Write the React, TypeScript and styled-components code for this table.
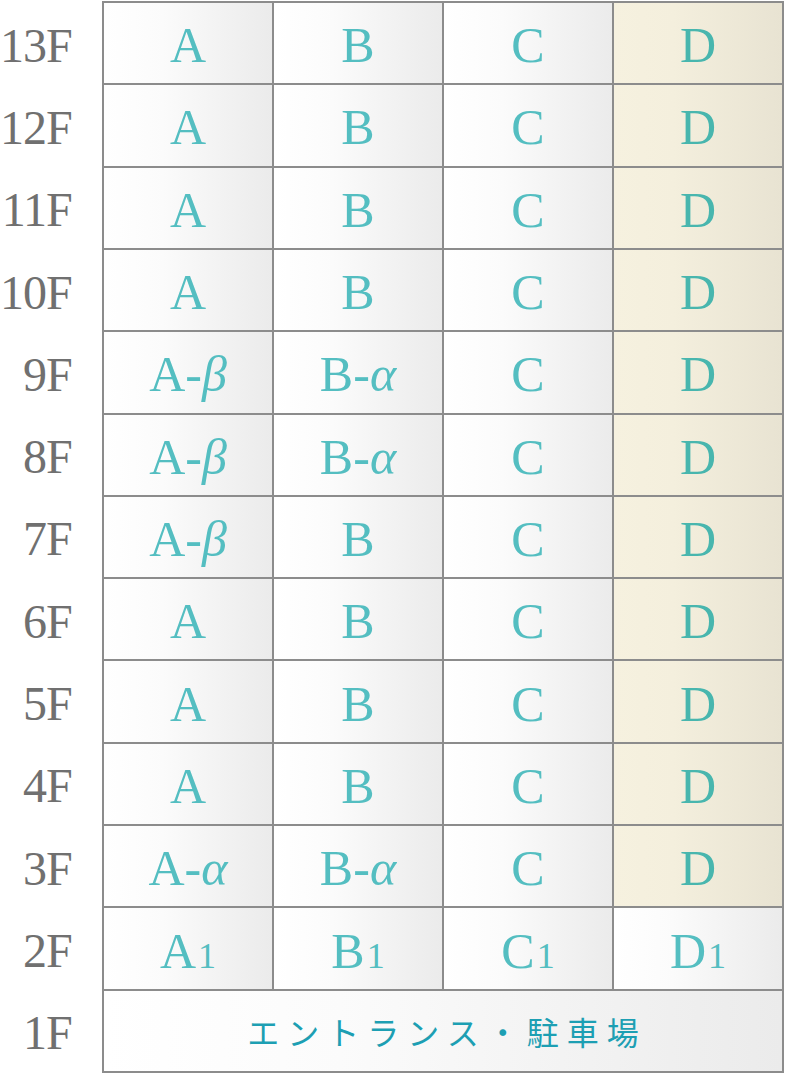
import React from "react";
import styled, { createGlobalStyle } from "styled-components";

const GlobalStyle = createGlobalStyle`
  html, body {
    margin: 0;
    padding: 0;
    background: #fff;
  }
`;

const Page = styled.div`
  display: grid;
  grid-template-columns: 102px 682px;
  padding-top: 1px;
  height: 1072px;
`;

const Labels = styled.div`
  display: grid;
  grid-template-rows: repeat(13, 1fr);
  row-gap: 2px;
  padding: 2px 0;
`;

const Label = styled.div`
  display: flex;
  align-items: center;
  justify-content: flex-end;
  padding-right: 31px;
  padding-top: 4px;
  font-family: "Liberation Serif", serif;
  font-size: 48px;
  color: #707070;
  letter-spacing: -1px;
`;

const Table = styled.div`
  display: grid;
  grid-template-columns: repeat(4, 1fr);
  grid-template-rows: repeat(13, 1fr);
  gap: 2px;
  padding: 2px;
  background: #8c8c8c;
`;

const Cell = styled.div<{ $tone?: "plain" | "beige" }>`
  display: flex;
  align-items: center;
  justify-content: center;
  padding-top: 4px;
  font-family: "Liberation Serif", serif;
  font-size: 50px;
  color: ${({ $tone }) => ($tone === "beige" ? "#48b6ae" : "#54bec1")};
  background: ${({ $tone }) =>
    $tone === "beige"
      ? "linear-gradient(to right, #f6f1df 0%, #f4efdd 35%, #e8e3d2 100%)"
      : "linear-gradient(to right, #ffffff 0%, #fbfbfb 35%, #ebebeb 100%)"};
`;

const Wide = styled(Cell)`
  grid-column: 1 / span 4;
  font-family: "Noto Sans CJK JP", sans-serif;
  font-size: 32px;
  letter-spacing: 8px;
  padding-left: 8px;
  padding-top: 0;
  color: #1d9fb3;
`;

const Greek = styled.i`
  font-style: italic;
`;

const Small = styled.span`
  font-size: 0.72em;
  margin-left: 2px;
  vertical-align: baseline;
`;

const floors = [
  { f: "13F", units: ["A", "B", "C", "D"] },
  { f: "12F", units: ["A", "B", "C", "D"] },
  { f: "11F", units: ["A", "B", "C", "D"] },
  { f: "10F", units: ["A", "B", "C", "D"] },
  { f: "9F", units: ["A-β", "B-α", "C", "D"] },
  { f: "8F", units: ["A-β", "B-α", "C", "D"] },
  { f: "7F", units: ["A-β", "B", "C", "D"] },
  { f: "6F", units: ["A", "B", "C", "D"] },
  { f: "5F", units: ["A", "B", "C", "D"] },
  { f: "4F", units: ["A", "B", "C", "D"] },
  { f: "3F", units: ["A-α", "B-α", "C", "D"] },
];

function Unit({ name }: { name: string }) {
  const [base, greek] = name.split("-");
  if (greek) {
    return (
      <span>
        {base}-<Greek>{greek}</Greek>
      </span>
    );
  }
  return <span>{name}</span>;
}

export default function App() {
  return (
    <>
      <GlobalStyle />
      <Page>
        <Labels>
          {floors.map((r) => (
            <Label key={r.f}>{r.f}</Label>
          ))}
          <Label>2F</Label>
          <Label>1F</Label>
        </Labels>
        <Table>
          {floors.map((r) =>
            r.units.map((u, i) => (
              <Cell key={r.f + i} $tone={i === 3 ? "beige" : "plain"}>
                <Unit name={u} />
              </Cell>
            ))
          )}
          {["A", "B", "C", "D"].map((u) => (
            <Cell key={"2F" + u}>
              <span>
                {u}
                <Small>1</Small>
              </span>
            </Cell>
          ))}
          <Wide>エントランス・駐車場</Wide>
        </Table>
      </Page>
    </>
  );
}
